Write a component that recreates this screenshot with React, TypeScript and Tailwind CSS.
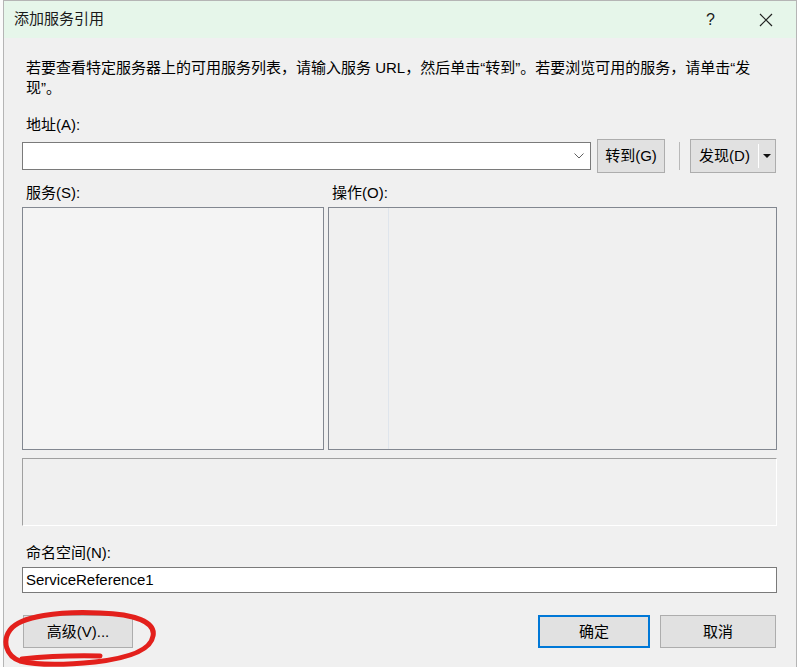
import React from "react";

const font = "font-['Liberation_Sans','Noto_Sans_CJK_SC',sans-serif]";

function Btn({ children, className = "" }: { children: React.ReactNode; className?: string }) {
  return (
    <div
      className={`flex items-center justify-center bg-[#e1e1e1] border border-[#adadad] text-[15px] text-black ${className}`}
    >
      {children}
    </div>
  );
}

export default function App() {
  return (
    <div className={`relative w-[797px] h-[667px] flex bg-white overflow-hidden ${font}`}>
      <div className="w-[3px] shrink-0 bg-[#fbfbfb]" />
      <div className="flex-1 flex flex-col bg-[#f0f0f0] border-l border-t border-r border-[#b5b5b5]">
        {/* title bar */}
        <div className="h-[37px] shrink-0 flex items-center bg-[#e6f6ea] pl-[10px] text-[15px] text-[#1a1a1a]">
          <span>添加服务引用</span>
          <span className="ml-auto mr-[44px] text-[16px]">?</span>
          <svg width="14" height="14" viewBox="0 0 14 14" className="mr-[23px]">
            <path d="M1 1 L13 13 M13 1 L1 13" stroke="#222" strokeWidth="1.2" />
          </svg>
        </div>

        <div className="flex-1 flex flex-col pl-[18px] pr-[19px] text-[15px] leading-[20px] text-black">
          <div className="pl-1 mt-[20px] whitespace-nowrap">
            若要查看特定服务器上的可用服务列表，请输入服务 URL，然后单击“转到”。若要浏览可用的服务，请单击“发
            <br />
            现”。
          </div>

          <div className="pl-1 mt-[17px]">地址(A):</div>
          <div className="mt-[4px] flex items-center h-[34px]">
            <div className="w-[569px] h-[28px] bg-white border border-[#7a7a7a] flex items-center justify-end pr-[6px]">
              <svg width="10" height="6" viewBox="0 0 10 6">
                <path d="M0.5 0.5 L5 5 L9.5 0.5" fill="none" stroke="#606060" strokeWidth="1" />
              </svg>
            </div>
            <Btn className="ml-[6px] w-[68px] h-[34px]">转到(G)</Btn>
            <div className="ml-[14px] w-px h-[28px] bg-[#b9b9b9]" />
            <div className="ml-[10px] w-[86px] h-[34px] flex bg-[#e1e1e1] border border-[#adadad]">
              <div className="flex-1 flex items-center justify-center">发现(D)</div>
              <div className="w-px my-[4px] bg-[#8a8a8a] border-r border-white" />
              <div className="w-[16px] flex items-center justify-center">
                <svg width="8" height="4" viewBox="0 0 8 4">
                  <path d="M0 0 L8 0 L4 4 Z" fill="#111" />
                </svg>
              </div>
            </div>
          </div>

          <div className="mt-[10px] flex">
            <div className="w-[306px] pl-1">服务(S):</div>
            <div className="pl-1">操作(O):</div>
          </div>
          <div className="mt-[4px] flex h-[243px]">
            <div className="w-[302px] bg-[#f4f4f4] border border-[#828790]" />
            <div className="ml-[4px] flex-1 flex bg-[#f0f0f0] border border-[#828790]">
              <div className="w-[60px] border-r border-[#dfe5ec]" />
            </div>
          </div>

          <div className="mt-[8px] h-[68px] border-t border-l border-[#a0a0a0] border-b border-r border-b-white border-r-white" />

          <div className="pl-1 mt-[17px]">命名空间(N):</div>
          <div className="mt-[4px] h-[26px] bg-white border border-[#7a7a7a] flex items-center pl-[3px]">
            ServiceReference1
          </div>

          <div className="mt-[22px] flex items-center">
            <Btn className="ml-px w-[110px] h-[33px]">高级(V)...</Btn>
            <div className="ml-auto w-[112px] h-[33px] flex items-center justify-center bg-[#e1e1e1] border-2 border-[#0078d7]">
              确定
            </div>
            <Btn className="ml-[10px] mr-px w-[116px] h-[33px]">取消</Btn>
          </div>
        </div>
      </div>

      {/* red hand-drawn annotation */}
      <svg className="absolute inset-0 pointer-events-none" width="797" height="667" viewBox="0 0 797 667">
        <path d="M100 656 Q60 655 22 659" fill="none" stroke="#e3201c" strokeWidth="5" strokeLinecap="round" />
        <path
          d="M20 661 C6 656 2 641 10 630 C20 616 60 611 100 613 C135 614 156 622 153 636 C151 650 130 658 95 662 C65 665 36 665 20 661"
          fill="none"
          stroke="#e3201c"
          strokeWidth="5"
          strokeLinecap="round"
        />
      </svg>
    </div>
  );
}
